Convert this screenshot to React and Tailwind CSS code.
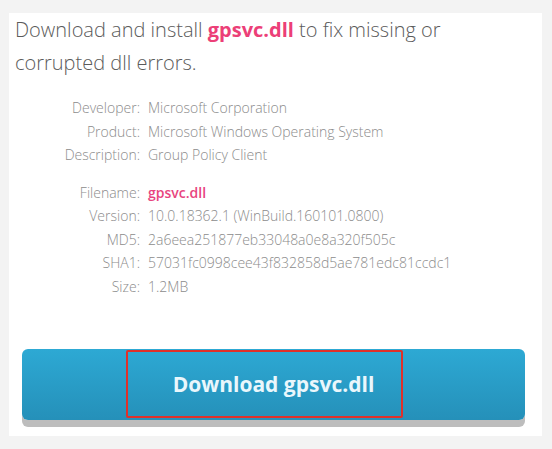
import React from "react";

const rowsA = [
  ["Developer", "Microsoft Corporation"],
  ["Product", "Microsoft Windows Operating System"],
  ["Description", "Group Policy Client"],
];

const rowsB = [
  ["Filename", "gpsvc.dll", true],
  ["Version", "10.0.18362.1 (WinBuild.160101.0800)"],
  ["MD5", "2a6eea251877eb33048a0e8a320f505c"],
  ["SHA1", "57031fc0998cee43f832858d5ae781edc81ccdc1"],
  ["Size", "1.2MB"],
];

function InfoRows({ rows }) {
  return (
    <div className="flex flex-col">
      {rows.map(([label, value, hl]) => (
        <div key={label} className="flex leading-[23.5px] text-[14px]">
          <span className="w-[131px] text-right text-[#8c8c8c] font-light">{label}:</span>
          <span className={`ml-[8px] ${hl ? "text-[#e8457f] font-semibold" : "text-[#8c8c8c] font-light"}`}>
            {value}
          </span>
        </div>
      ))}
    </div>
  );
}

export default function App() {
  return (
    <div className="min-h-screen bg-[#f3f3f3] pt-[13px] pl-[9px]" style={{ fontFamily: '"Open Sans", sans-serif' }}>
      <div className="w-[533px] h-[423px] bg-white">
        <p className="pl-[6px] w-[470px] text-[20px] leading-[33px] text-[#5b5b5b] font-light">
          Download and install <span className="font-bold text-[#ec3f78]">gpsvc.dll</span> to fix missing or corrupted dll errors.
        </p>
        <div className="mt-[17px] flex flex-col gap-[14px]">
          <InfoRows rows={rowsA} />
          <InfoRows rows={rowsB} />
        </div>
        <div className="relative mt-[51px] ml-[13px] w-[503px]">
          <div className="h-[71px] rounded-[6px] bg-gradient-to-b from-[#2da9d4] to-[#2590b9] shadow-[0_7px_0_#bdbdbd] flex items-center justify-center">
            <span className="text-[21px] font-bold text-[#eaf7fc]">Download gpsvc.dll</span>
          </div>
          <div className="absolute left-[104px] top-[1px] w-[277px] h-[68px] border-2 border-[#e0302a] rounded-[2px]" />
        </div>
      </div>
    </div>
  );
}
